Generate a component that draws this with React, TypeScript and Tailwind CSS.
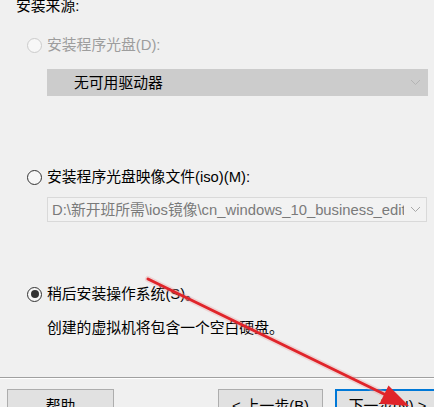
import React from "react";

const font = { fontFamily: '"Liberation Sans", "Noto Sans CJK SC", sans-serif' };

function Chevron({ color }: { color: string }) {
  return (
    <svg width="11" height="7" viewBox="0 0 11 7" className="shrink-0">
      <polyline points="1,1 5.5,5.5 10,1" fill="none" stroke={color} strokeWidth="1" />
    </svg>
  );
}

export default function App() {
  return (
    <div
      className="relative w-[434px] h-[407px] overflow-hidden bg-[#f0f0f0] text-[14.8px] text-black"
      style={font}
    >
      <div className="flex flex-col">
        <div className="mt-[-4px] pl-[16px] leading-[20px]">安装来源:</div>

        {/* radio 1 disabled */}
        <div className="mt-[19px] flex items-center pl-[27px] leading-[20px]">
          <span className="w-[15px] h-[15px] rounded-full border border-[#cbcbcb] bg-[#f7f7f7] shrink-0" />
          <span className="ml-[5px] text-[#9d9d9d]">安装程序光盘(D):</span>
        </div>

        <div className="mt-[14px] ml-[47px] w-[381px] h-[27px] bg-[#cccccc] flex items-center pl-[27px] pr-[7px]">
          <span className="flex-1 leading-[20px]">无可用驱动器</span>
          <Chevron color="#b4b4b4" />
        </div>

        {/* radio 2 */}
        <div className="mt-[71px] flex items-center pl-[27px] leading-[20px]">
          <span className="w-[15px] h-[15px] rounded-full border border-[#333333] bg-[#f7f7f7] shrink-0" />
          <span className="ml-[5px]">安装程序光盘映像文件(iso)(M):</span>
        </div>

        <div className="mt-[10px] ml-[47px] w-[380px] h-[25px] border border-[#d9d9d9] bg-[#f2f2f2] flex items-center pl-[4px] pr-[5px]">
          <span className="flex-1 overflow-hidden whitespace-nowrap leading-[20px] text-[#7a7a7a] mr-[6px]">
            D:\新开班所需\ios镜像\cn_windows_10_business_editions_version_1909_x64_dvd.iso
          </span>
          <Chevron color="#a8a8a8" />
        </div>

        {/* radio 3 checked */}
        <div className="mt-[62px] flex items-center pl-[27px] leading-[20px]">
          <span className="w-[15px] h-[15px] rounded-full border border-[#333333] bg-[#f7f7f7] shrink-0 flex items-center justify-center">
            <span className="w-[8px] h-[8px] rounded-full bg-[#333333]" />
          </span>
          <span className="ml-[5px]">稍后安装操作系统(S)。</span>
        </div>

        <div className="mt-[14px] pl-[47px] leading-[20px]">创建的虚拟机将包含一个空白硬盘。</div>

        <div className="mt-[39px] h-px bg-[#a0a0a0]" />
        <div className="h-px bg-white" />

        <div className="mt-[10px] flex items-start">
          <div className="ml-[7px] w-[107px] h-[31px] border border-[#adadad] bg-[#e1e1e1] flex items-center justify-center shrink-0 pt-[4px]">
            帮助
          </div>
          <div className="ml-[104px] w-[105px] h-[31px] border border-[#adadad] bg-[#e1e1e1] flex items-center justify-center shrink-0 pt-[4px]">
            &lt; 上一步(B)
          </div>
          <div className="ml-[12px] w-[105px] h-[31px] border-2 border-[#0078d7] bg-[#e1e1e1] flex items-center justify-center shrink-0 pt-[3px]">
            下一步(N) &gt;
          </div>
        </div>
      </div>

      {/* red annotation arrow */}
      <svg className="absolute left-0 top-0 pointer-events-none" width="434" height="407" viewBox="0 0 434 407">
        <line x1="148" y1="279" x2="386" y2="395" stroke="#e8a0a0" strokeWidth="6" strokeOpacity="0.35" strokeLinecap="round" />
        <line x1="148" y1="279" x2="386" y2="395" stroke="#e0242a" strokeWidth="3" strokeLinecap="round" />
        <polygon points="409,406 379.6,403.7 388.5,385.5" fill="#e0242a" />
      </svg>
    </div>
  );
}
